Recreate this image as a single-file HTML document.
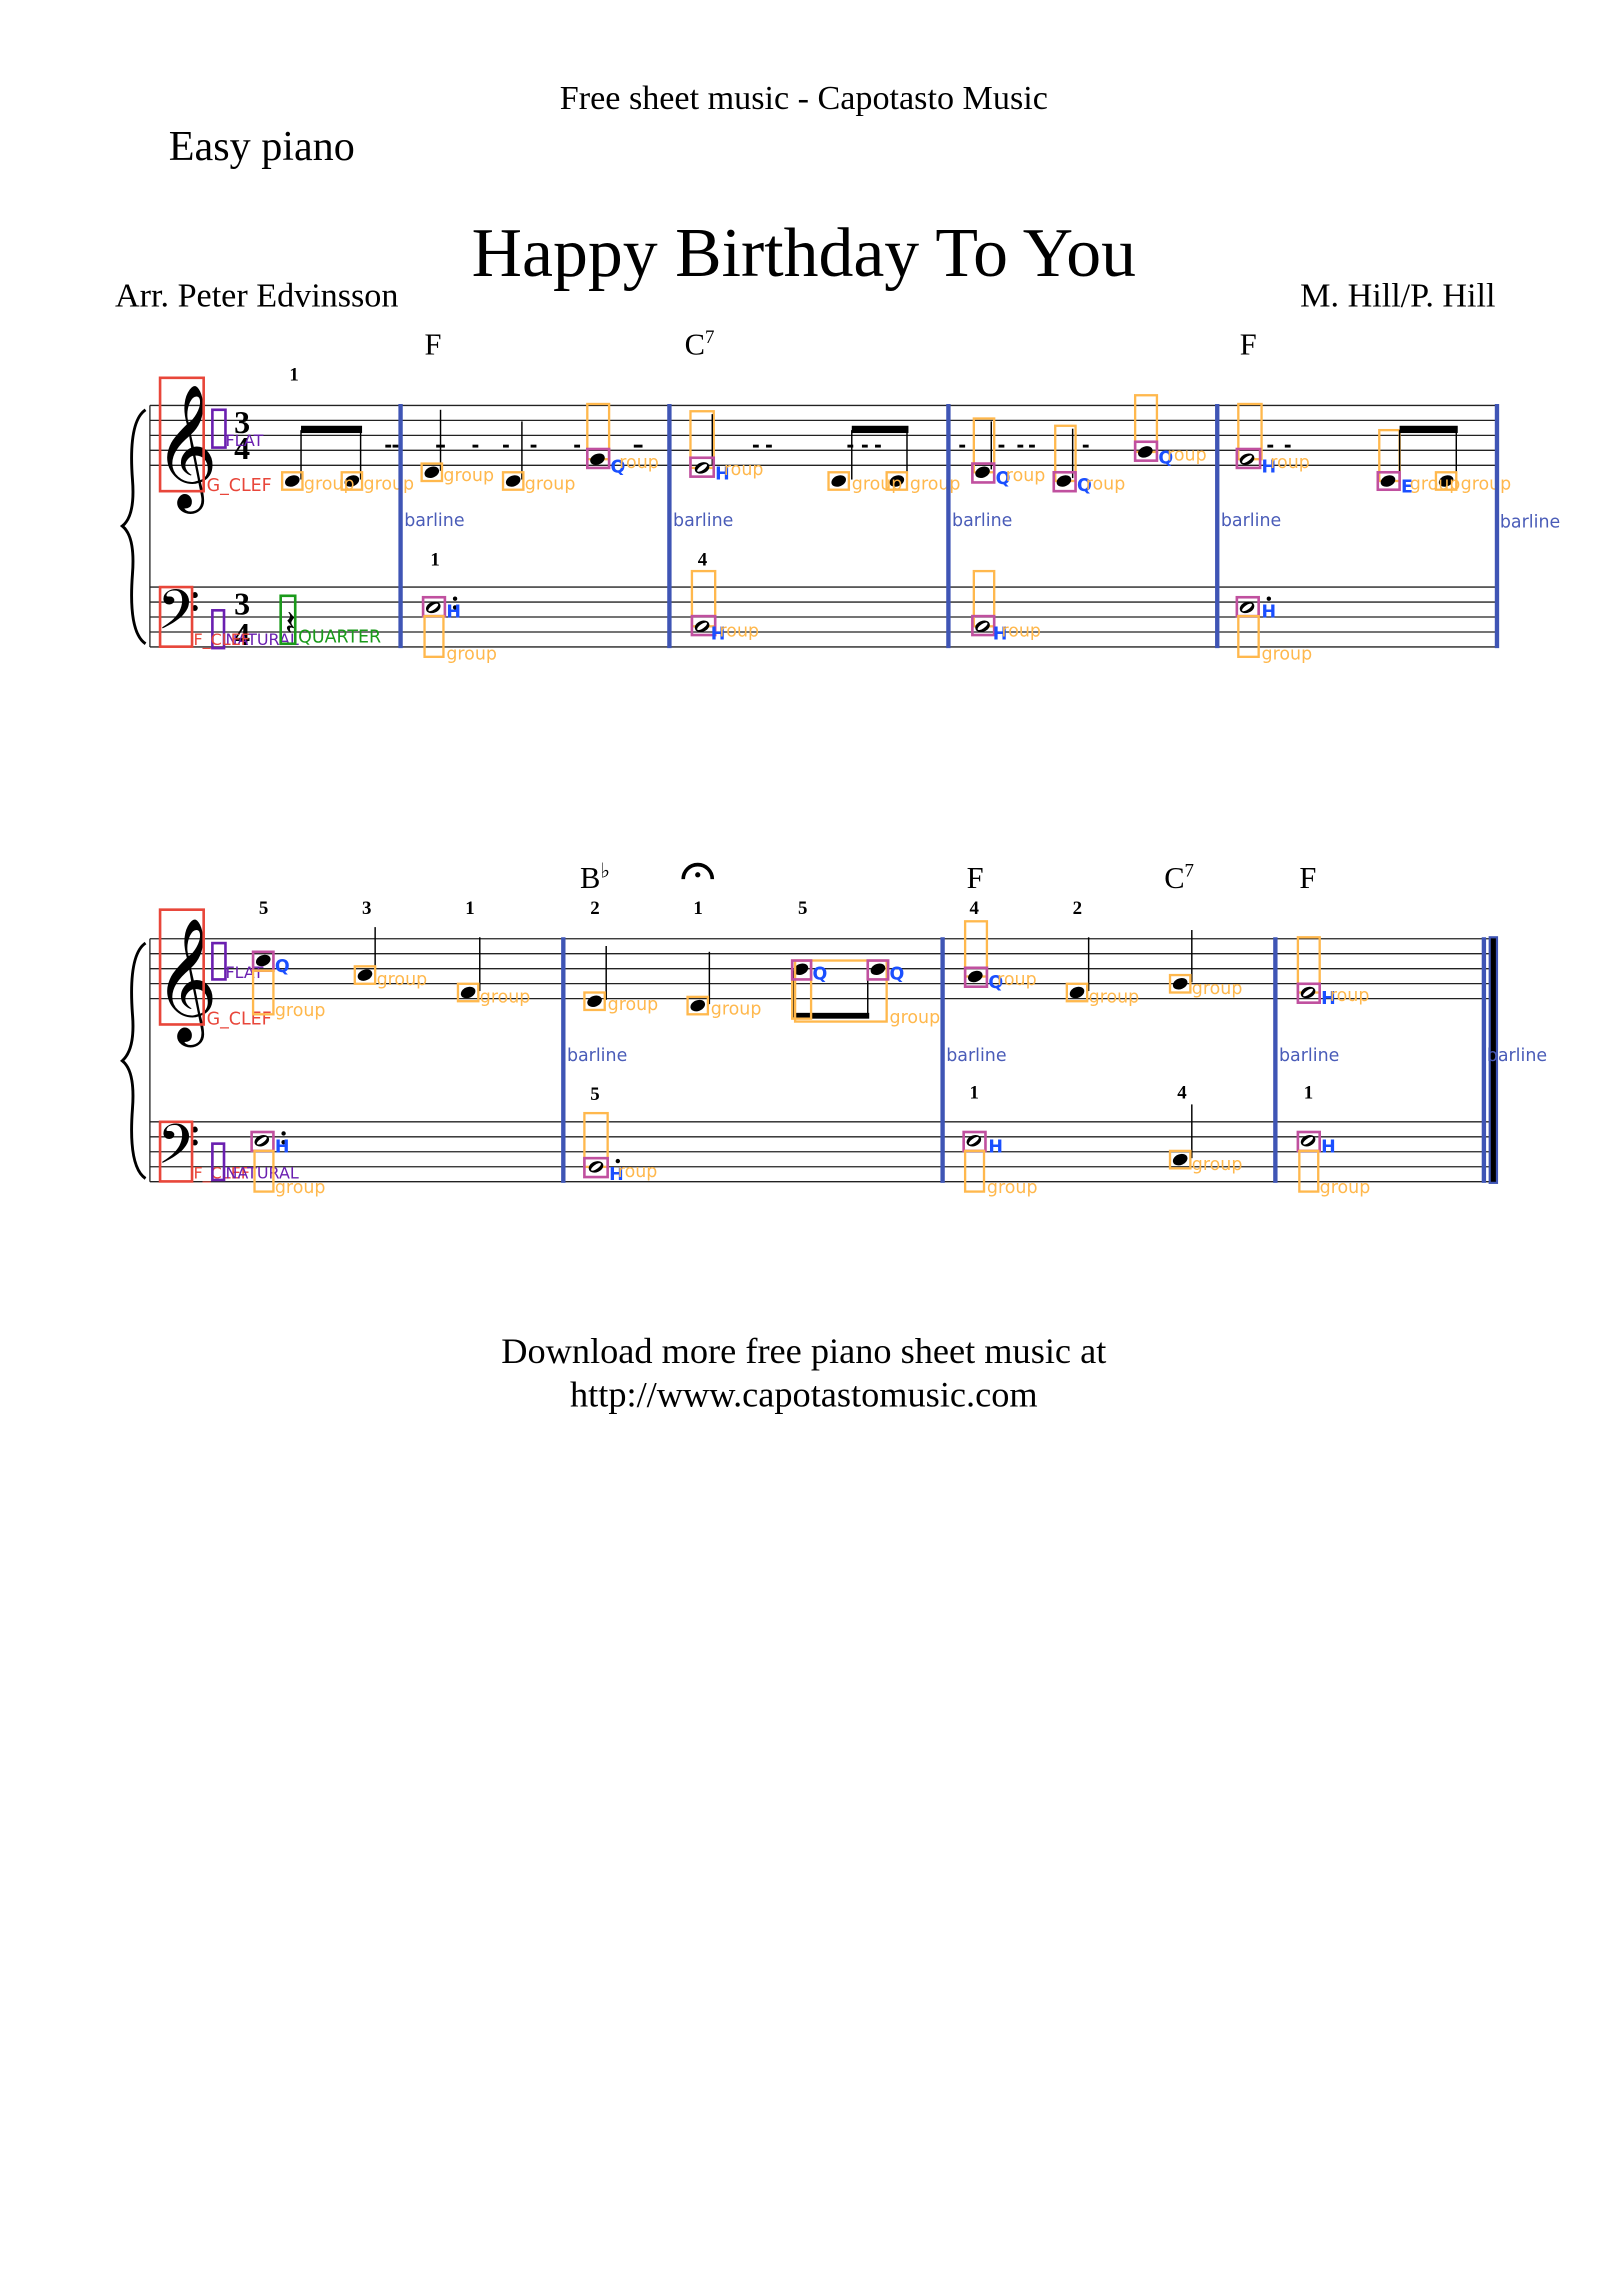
<!DOCTYPE html>
<html><head><meta charset="utf-8"><style>
html,body{margin:0;padding:0;background:#fff;width:1612px;height:2280px;overflow:hidden}
svg{display:block}
.t{font-family:"Liberation Serif",serif;fill:#000}
.f{font-family:"Liberation Serif",serif;font-weight:bold;font-size:13px;fill:#000}
.g{font-family:"DejaVu Sans",sans-serif;font-size:12px;fill:#ffb84d}
.b{font-family:"DejaVu Sans",sans-serif;font-size:12px;fill:#4a5cb8}
.q{font-family:"DejaVu Sans",sans-serif;font-weight:bold;font-size:12px;fill:#1a4fff}
.st line{stroke:#222;stroke-width:0.9}
.bl{stroke:#3f55b5;stroke-width:3}
.ob{fill:none;stroke:#ffb84d;stroke-width:1.6}
.mb{fill:none;stroke:#c0509f;stroke-width:1.8}
.rb{fill:none;stroke:#e8463a;stroke-width:1.8}
.pb{fill:none;stroke:#6a1fb0;stroke-width:1.8}
.stem{stroke:#000;stroke-width:1}
</style></head><body>
<svg width="1612" height="2280" viewBox="0 0 1109 1569" xmlns="http://www.w3.org/2000/svg">
<defs>
<g id="q"><ellipse cx="0" cy="0" rx="5.2" ry="3.7" transform="rotate(-22)" fill="#000"/></g>
<g id="h"><ellipse cx="0" cy="0" rx="5.2" ry="3.7" transform="rotate(-22)" fill="#000"/><ellipse cx="0" cy="0" rx="4" ry="1.5" transform="rotate(-35)" fill="#fff"/></g>
</defs>

<text class="t" x="553" y="75" font-size="23.5" text-anchor="middle">Free sheet music - Capotasto Music</text>
<text class="t" x="116" y="110" font-size="29">Easy piano</text>
<text class="t" x="553" y="190" font-size="48" text-anchor="middle">Happy Birthday To You</text>
<text class="t" x="79" y="211" font-size="23.5">Arr. Peter Edvinsson</text>
<text class="t" x="1029" y="211" font-size="23.5" text-anchor="end">M. Hill/P. Hill</text>
<text class="t" x="292" y="244" font-size="21">F</text>
<text class="t" x="471" y="244" font-size="21">C<tspan font-size="13" dy="-8">7</tspan></text>
<text class="t" x="853" y="244" font-size="21">F</text>

<!-- SYSTEM 1 -->
<g class="st">
<line x1="103" y1="279" x2="1030" y2="279"/><line x1="103" y1="289.3" x2="1030" y2="289.3"/><line x1="103" y1="299.6" x2="1030" y2="299.6"/><line x1="103" y1="309.9" x2="1030" y2="309.9"/><line x1="103" y1="320.2" x2="1030" y2="320.2"/>
<line x1="103" y1="404" x2="1030" y2="404"/><line x1="103" y1="414.3" x2="1030" y2="414.3"/><line x1="103" y1="424.6" x2="1030" y2="424.6"/><line x1="103" y1="434.9" x2="1030" y2="434.9"/><line x1="103" y1="445.2" x2="1030" y2="445.2"/>
<line x1="103" y1="279" x2="103" y2="445.2"/>
</g>
<path d="M100 282 Q88 290 91 330 Q93 355 84 362 Q93 369 91 395 Q88 435 100 443" fill="none" stroke="#000" stroke-width="2"/>
<text class="t" x="106" y="332" font-size="74">𝄞</text>
<text class="t" x="108" y="440" font-size="46">𝄢</text>
<text class="t" x="161" y="298" font-size="22" font-weight="bold">3</text><text class="t" x="161" y="316" font-size="22" font-weight="bold">4</text>
<text class="t" x="161" y="423" font-size="22" font-weight="bold">3</text><text class="t" x="161" y="444" font-size="22" font-weight="bold">4</text>
<rect class="rb" x="110" y="260" width="30" height="78"/><text x="142" y="338" font-family="DejaVu Sans" font-size="12" fill="#e8463a">G_CLEF</text>
<rect class="rb" x="110" y="404" width="22" height="41"/>
<rect class="pb" x="146" y="282" width="9" height="26"/><text x="155" y="307" font-family="DejaVu Sans" font-size="11" fill="#6a1fb0">FLAT</text>
<rect class="pb" x="146" y="420" width="8" height="26"/><text x="155" y="444" font-family="DejaVu Sans" font-size="11" fill="#6a1fb0">NATURAL</text>
<text x="133" y="444" font-family="DejaVu Sans" font-size="11" fill="#e8463a">F_CLEF</text>
<rect x="193" y="410" width="10" height="33" fill="none" stroke="#1a9a1a" stroke-width="1.8"/><text x="205" y="442" font-family="DejaVu Sans" font-size="12" fill="#1a9a1a">QUARTER</text>
<text class="t" x="196" y="437" font-size="24">𝄽</text>

<text class="f" x="199" y="262">1</text>
<line class="stem" x1="207" y1="296" x2="207" y2="330"/><line class="stem" x1="248" y1="296" x2="248" y2="330"/>
<rect x="207" y="293" width="42" height="5" fill="#000"/>
<use href="#q" x="201" y="331"/><use href="#q" x="242" y="331"/>
<rect class="ob" x="194" y="325" width="14" height="12"/><rect class="ob" x="235" y="325" width="14" height="12"/>
<text class="g" x="209" y="337">group</text><text class="g" x="250" y="337">group</text>
<g fill="#000"><rect x="265" y="306" width="4" height="2"/><rect x="270" y="306" width="4" height="2"/></g>
<line class="bl" x1="275.5" y1="278" x2="275.5" y2="446"/><text class="b" x="278" y="362">barline</text>
<line class="stem" x1="303" y1="282" x2="303" y2="324"/><use href="#q" x="297" y="325"/><rect class="ob" x="290" y="319" width="14" height="12"/><text class="g" x="305" y="331">group</text>
<line class="stem" x1="359" y1="290" x2="359" y2="330"/><use href="#q" x="353" y="331"/><rect class="ob" x="346" y="325" width="14" height="12"/><text class="g" x="361" y="337">group</text>
<g fill="#000"><rect x="300" y="306" width="6" height="2"/><rect x="325" y="306" width="4" height="2"/><rect x="346" y="306" width="4" height="2"/><rect x="365" y="306" width="4" height="2"/><rect x="395" y="306" width="4" height="2"/><rect x="436" y="306" width="6" height="2"/></g>
<rect class="ob" x="404" y="278" width="15" height="38"/><use href="#q" x="411" y="316"/><rect class="mb" x="404" y="309" width="15" height="13"/><text class="q" x="420" y="325">Q</text><text class="g" x="426" y="322">roup</text>
<text class="f" x="296" y="389">1</text>
<use href="#h" x="298" y="418"/><rect class="mb" x="291" y="411" width="15" height="13"/><rect class="ob" x="292" y="424" width="13" height="28"/><circle cx="313" cy="412" r="1.5" fill="#000"/><circle cx="313" cy="418" r="1.5"/><text class="q" x="307" y="425">H</text><text class="g" x="307" y="454">group</text>
<line class="bl" x1="460.5" y1="278" x2="460.5" y2="446"/><text class="b" x="463" y="362">barline</text>
<rect class="ob" x="475" y="283" width="16" height="39"/><line class="stem" x1="490" y1="285" x2="490" y2="320"/><use href="#h" x="483" y="322"/><rect class="mb" x="475" y="315" width="16" height="13"/><text class="q" x="492" y="330">H</text><text class="g" x="498" y="327">roup</text>
<g fill="#000"><rect x="518" y="306" width="4" height="2"/><rect x="527" y="306" width="4" height="2"/><rect x="583" y="306" width="4" height="2"/><rect x="593" y="306" width="4" height="2"/><rect x="602" y="306" width="4" height="2"/></g>
<line class="stem" x1="586" y1="296" x2="586" y2="330"/><line class="stem" x1="624" y1="296" x2="624" y2="330"/><rect x="586" y="293" width="39" height="5" fill="#000"/>
<use href="#q" x="577" y="331"/><use href="#q" x="617" y="331"/><rect class="ob" x="570" y="325" width="14" height="12"/><rect class="ob" x="610" y="325" width="14" height="12"/>
<text class="g" x="586" y="337">group</text><text class="g" x="626" y="337">group</text>
<line class="bl" x1="652.5" y1="278" x2="652.5" y2="446"/><text class="b" x="655" y="362">barline</text>
<text class="f" x="480" y="389">4</text>
<rect class="ob" x="476" y="393" width="16" height="38"/><use href="#h" x="483" y="431"/><rect class="mb" x="476" y="424" width="16" height="13"/><text class="q" x="489" y="440">H</text><text class="g" x="495" y="438">roup</text>
<rect class="ob" x="670" y="288" width="14" height="37"/><line class="stem" x1="682" y1="290" x2="682" y2="323"/><use href="#q" x="676" y="325"/><rect class="mb" x="669" y="319" width="15" height="13"/><text class="q" x="685" y="333">Q</text><text class="g" x="692" y="331">roup</text>
<rect class="ob" x="726" y="293" width="14" height="38"/><line class="stem" x1="738" y1="295" x2="738" y2="329"/><use href="#q" x="732" y="331"/><rect class="mb" x="725" y="325" width="15" height="13"/><text class="q" x="741" y="338">Q</text><text class="g" x="747" y="337">roup</text>
<rect class="ob" x="781" y="272" width="15" height="39"/><use href="#q" x="788" y="311"/><rect class="mb" x="781" y="304" width="15" height="13"/><text class="q" x="797" y="319">Q</text><text class="g" x="803" y="317">roup</text>
<g fill="#000"><rect x="660" y="306" width="4" height="2"/><rect x="687" y="306" width="4" height="2"/><rect x="700" y="306" width="4" height="2"/><rect x="708" y="306" width="4" height="2"/><rect x="745" y="306" width="4" height="2"/></g>
<rect class="ob" x="670" y="393" width="14" height="38"/><use href="#h" x="676" y="431"/><rect class="mb" x="669" y="424" width="15" height="13"/><text class="q" x="683" y="440">H</text><text class="g" x="689" y="438">roup</text>
<line class="bl" x1="837.5" y1="278" x2="837.5" y2="446"/><text class="b" x="840" y="362">barline</text>
<rect class="ob" x="852" y="278" width="16" height="38"/><use href="#h" x="858" y="316"/><rect class="mb" x="851" y="309" width="16" height="13"/><text class="q" x="868" y="325">H</text><text class="g" x="874" y="322">roup</text>
<g fill="#000"><rect x="872" y="306" width="4" height="2"/><rect x="884" y="306" width="4" height="2"/></g>
<rect class="ob" x="949" y="296" width="14" height="35"/>
<line class="stem" x1="963" y1="296" x2="963" y2="330"/><line class="stem" x1="1002" y1="296" x2="1002" y2="330"/><rect x="963" y="293" width="40" height="5" fill="#000"/>
<use href="#q" x="955" y="331"/><use href="#q" x="995" y="331"/><rect class="mb" x="948" y="325" width="15" height="12"/><rect class="ob" x="988" y="325" width="14" height="12"/>
<text class="q" x="964" y="339">E</text><text class="g" x="970" y="337">group</text><text class="g" x="1005" y="337">group</text>
<use href="#h" x="858" y="418"/><rect class="mb" x="851" y="411" width="15" height="13"/><rect class="ob" x="852" y="424" width="14" height="28"/><circle cx="873" cy="412" r="1.5"/><text class="q" x="868" y="425">H</text><text class="g" x="868" y="454">group</text>
<line class="bl" x1="1030" y1="278" x2="1030" y2="446"/><text class="b" x="1032" y="363">barline</text>

<!-- SYSTEM 2 -->
<text class="t" x="399" y="611" font-size="21">B<tspan font-size="14" dy="-7">♭</tspan></text>
<path d="M470 605 A10 10 0 0 1 490 605" fill="none" stroke="#000" stroke-width="2.5"/><circle cx="480" cy="602" r="1.8"/>
<text class="t" x="665" y="611" font-size="21">F</text>
<text class="t" x="801" y="611" font-size="21">C<tspan font-size="13" dy="-8">7</tspan></text>
<text class="t" x="894" y="611" font-size="21">F</text>
<g class="st">
<line x1="103" y1="646" x2="1030" y2="646"/><line x1="103" y1="656.3" x2="1030" y2="656.3"/><line x1="103" y1="666.6" x2="1030" y2="666.6"/><line x1="103" y1="676.9" x2="1030" y2="676.9"/><line x1="103" y1="687.2" x2="1030" y2="687.2"/>
<line x1="103" y1="772" x2="1030" y2="772"/><line x1="103" y1="782.3" x2="1030" y2="782.3"/><line x1="103" y1="792.6" x2="1030" y2="792.6"/><line x1="103" y1="802.9" x2="1030" y2="802.9"/><line x1="103" y1="813.2" x2="1030" y2="813.2"/>
<line x1="103" y1="646" x2="103" y2="813.2"/>
</g>
<path d="M100 649 Q88 657 91 698 Q93 722 84 730 Q93 737 91 763 Q88 803 100 811" fill="none" stroke="#000" stroke-width="2"/>
<text class="t" x="106" y="699" font-size="74">𝄞</text>
<text class="t" x="108" y="808" font-size="46">𝄢</text>
<rect class="rb" x="110" y="626" width="30" height="79"/><text x="142" y="705" font-family="DejaVu Sans" font-size="12" fill="#e8463a">G_CLEF</text>
<rect class="rb" x="110" y="772" width="22" height="41"/><text x="133" y="811" font-family="DejaVu Sans" font-size="11" fill="#e8463a">F_CLEF</text>
<rect class="pb" x="146" y="649" width="9" height="25"/><text x="155" y="673" font-family="DejaVu Sans" font-size="11" fill="#6a1fb0">FLAT</text>
<rect class="pb" x="146" y="787" width="8" height="25"/><text x="155" y="811" font-family="DejaVu Sans" font-size="11" fill="#6a1fb0">NATURAL</text>
<text class="f" x="178" y="629">5</text><text class="f" x="249" y="629">3</text><text class="f" x="320" y="629">1</text>
<text class="f" x="406" y="629">2</text><text class="f" x="477" y="629">1</text><text class="f" x="549" y="629">5</text>
<text class="f" x="667" y="629">4</text><text class="f" x="738" y="629">2</text>
<use href="#q" x="181" y="661"/><rect class="mb" x="174" y="655" width="14" height="13"/><rect class="ob" x="174" y="668" width="14" height="30"/><text class="q" x="189" y="669">Q</text><text class="g" x="189" y="699">group</text>
<line class="stem" x1="258" y1="638" x2="258" y2="670"/><use href="#q" x="251" y="671"/><rect class="ob" x="244" y="665" width="14" height="12"/><text class="g" x="259" y="678">group</text>
<line class="stem" x1="330" y1="645" x2="330" y2="682"/><use href="#q" x="322" y="683"/><rect class="ob" x="315" y="677" width="14" height="12"/><text class="g" x="330" y="690">group</text>
<line class="bl" x1="387.5" y1="645" x2="387.5" y2="814"/><text class="b" x="390" y="730">barline</text>
<line class="stem" x1="417" y1="651" x2="417" y2="688"/><use href="#q" x="409" y="689"/><rect class="ob" x="402" y="683" width="14" height="12"/><text class="g" x="418" y="695">group</text>
<line class="stem" x1="488" y1="655" x2="488" y2="691"/><use href="#q" x="480" y="692"/><rect class="ob" x="473" y="686" width="14" height="12"/><text class="g" x="489" y="698">group</text>
<line class="stem" x1="546" y1="668" x2="546" y2="700"/><line class="stem" x1="597" y1="668" x2="597" y2="700"/><rect x="546" y="697" width="52" height="4" fill="#000"/>
<use href="#q" x="551" y="667"/><use href="#q" x="604" y="667"/>
<rect class="ob" x="547" y="661" width="63" height="42"/><rect class="ob" x="545" y="661" width="13" height="40"/>
<rect class="mb" x="545" y="661" width="13" height="13"/><rect class="mb" x="597" y="661" width="14" height="13"/>
<text class="q" x="559" y="674">Q</text><text class="q" x="612" y="674">Q</text><text class="g" x="612" y="704">group</text>
<line class="bl" x1="648.5" y1="645" x2="648.5" y2="814"/><text class="b" x="651" y="730">barline</text>
<text class="f" x="406" y="757">5</text>
<rect class="ob" x="402" y="766" width="16" height="37"/><use href="#h" x="410" y="803"/><rect class="mb" x="402" y="797" width="16" height="13"/><circle cx="425" cy="799" r="1.5"/><text class="q" x="419" y="812">H</text><text class="g" x="425" y="810">roup</text>
<use href="#h" x="180" y="785"/><rect class="mb" x="173" y="779" width="15" height="13"/><rect class="ob" x="175" y="792" width="13" height="28"/><circle cx="195" cy="780" r="1.5"/><circle cx="195" cy="786" r="1.5"/><text class="q" x="189" y="793">H</text><text class="g" x="189" y="821">group</text>
<rect class="ob" x="664" y="634" width="15" height="38"/><use href="#q" x="671" y="672"/><rect class="mb" x="664" y="666" width="15" height="13"/><text class="q" x="680" y="680">Q</text><text class="g" x="686" y="678">roup</text>
<line class="stem" x1="749" y1="645" x2="749" y2="682"/><use href="#q" x="741" y="683"/><rect class="ob" x="734" y="677" width="14" height="12"/><text class="g" x="749" y="690">group</text>
<line class="stem" x1="820" y1="640" x2="820" y2="676"/><use href="#q" x="812" y="677"/><rect class="ob" x="805" y="671" width="14" height="12"/><text class="g" x="820" y="684">group</text>
<text class="f" x="667" y="756">1</text><text class="f" x="810" y="756">4</text><text class="f" x="897" y="756">1</text>
<use href="#h" x="670" y="785"/><rect class="mb" x="663" y="779" width="15" height="13"/><rect class="ob" x="664" y="792" width="13" height="28"/><text class="q" x="680" y="793">H</text><text class="g" x="679" y="821">group</text>
<line class="stem" x1="820" y1="760" x2="820" y2="797"/><use href="#q" x="812" y="798"/><rect class="ob" x="805" y="792" width="14" height="12"/><text class="g" x="820" y="805">group</text>
<line class="bl" x1="877.5" y1="645" x2="877.5" y2="814"/><text class="b" x="880" y="730">barline</text>
<rect class="ob" x="893" y="645" width="15" height="38"/><use href="#h" x="900" y="683"/><rect class="mb" x="893" y="677" width="15" height="13"/><text class="q" x="909" y="691">H</text><text class="g" x="915" y="689">roup</text>
<use href="#h" x="900" y="785"/><rect class="mb" x="893" y="779" width="15" height="13"/><rect class="ob" x="894" y="792" width="13" height="28"/><text class="q" x="909" y="793">H</text><text class="g" x="908" y="821">group</text>
<line class="bl" x1="1021" y1="645" x2="1021" y2="814"/>
<rect x="1025" y="645" width="5" height="169" fill="#000" stroke="#3f55b5" stroke-width="1.5"/>
<text class="b" x="1023" y="730">barline</text>

<text class="t" x="553" y="938" font-size="25" text-anchor="middle">Download more free piano sheet music at</text>
<text class="t" x="553" y="968" font-size="25" text-anchor="middle">http://www.capotastomusic.com</text>
</svg>
</body></html>
